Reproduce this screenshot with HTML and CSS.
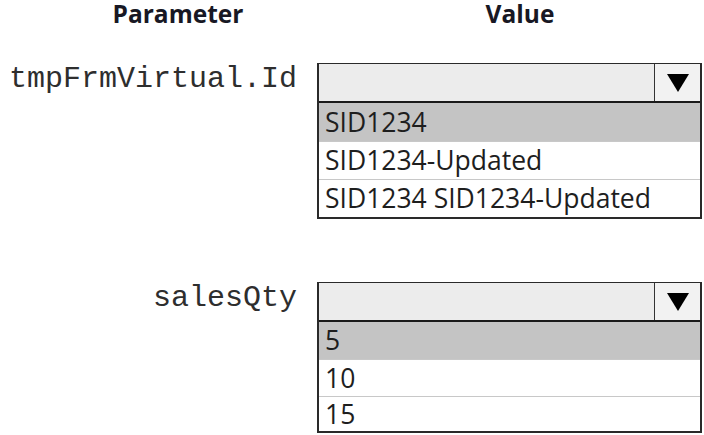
FILE: index.html
```html
<!DOCTYPE html>
<html lang="en">
  <head>
    <meta charset="UTF-8" />
    <title>Parameter values</title>
    <link rel="stylesheet" href="styles.css">
  </head>
  <body>
    <div class="headings">
      <div class="heading heading-param">Parameter</div>
      <div class="heading heading-value">Value</div>
    </div>

    <div class="param">
      <div class="param-name">tmpFrmVirtual.Id</div>
      <div class="dropdown">
        <div class="dropdown-head">
          <div class="dropdown-field"></div>
          <div class="dropdown-arrow"><span class="triangle"></span></div>
        </div>
        <div class="option selected">SID1234</div>
        <div class="option">SID1234-Updated</div>
        <div class="option">SID1234 SID1234-Updated</div>
      </div>
    </div>

    <div class="param param-second">
      <div class="param-name">salesQty</div>
      <div class="dropdown">
        <div class="dropdown-head">
          <div class="dropdown-field"></div>
          <div class="dropdown-arrow"><span class="triangle"></span></div>
        </div>
        <div class="option selected">5</div>
        <div class="option">10</div>
        <div class="option">15</div>
      </div>
    </div>
  </body>
</html>
```

FILE: styles.css
```css
* {
  box-sizing: border-box;
  margin: 0;
  padding: 0;
}

body {
  background: #fff;
  color: #111;
  font-family: "Open Sans", sans-serif;
  overflow: hidden;
}

.headings {
  display: flex;
  height: 30px;
  padding-top: 2px;
}

.heading {
  font-weight: 700;
  font-size: 24.5px;
  line-height: 24px;
  text-align: center;
  color: #181824;
}

.heading-param {
  width: 356px;
}

.heading-value {
  width: 328px;
}

.param {
  display: grid;
  grid-template-columns: 317px 385px;
  margin-top: 33px;
}

.param-second {
  margin-top: 63px;
}

.param-name {
  font-family: "Liberation Mono", monospace;
  font-size: 30px;
  line-height: 33px;
  text-align: right;
  padding-right: 20px;
  color: #2e2e2e;
}

.dropdown {
  border: 2px solid #2a2a2a;
  border-top-width: 1px;
}

.dropdown-head {
  display: flex;
  height: 39px;
  border-bottom: 2px solid #1a1a1a;
  background: #ececec;
}

.dropdown-field {
  flex: 1;
}

.dropdown-arrow {
  width: 46px;
  border-left: 1px solid #333;
  display: flex;
  align-items: center;
  justify-content: center;
  background: #f2f2f2;
}

.triangle {
  width: 0;
  height: 0;
  border-left: 11px solid transparent;
  border-right: 11px solid transparent;
  border-top: 18px solid #000;
}

.option {
  height: 38px;
  line-height: 37px;
  padding-left: 6px;
  font-size: 26.5px;
  color: #1e1e1e;
  border-top: 1px solid #c8c8c8;
}

.option.selected {
  background: #c4c4c4;
  border-top: none;
  line-height: 38px;
}

.param-second .option {
  height: 37px;
  line-height: 36px;
}

.param-second .option.selected {
  line-height: 37px;
}

.param-second .option:last-child {
  height: 35px;
  line-height: 34px;
}
```
